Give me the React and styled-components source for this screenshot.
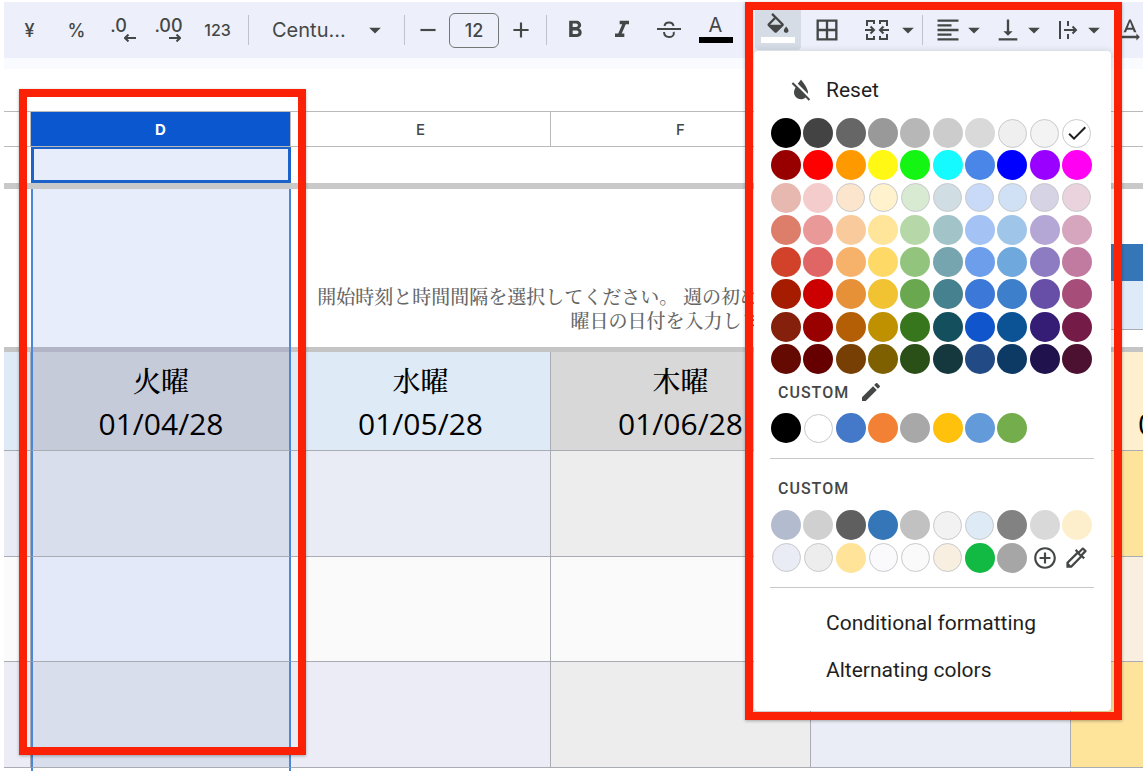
import React, {useState} from 'react';
import styled, {createGlobalStyle, css} from 'styled-components';
import {
  MdAdd,
  MdAddCircleOutline,
  MdArrowDropDown,
  MdBorderAll,
  MdCheck,
  MdEdit,
  MdFormatAlignLeft,
  MdFormatBold,
  MdFormatColorReset,
  MdFormatItalic,
  MdOutlineColorize,
  MdRemove,
  MdTextRotationNone,
  MdVerticalAlignBottom
} from 'react-icons/md';

const GlobalStyle = createGlobalStyle`
  * {
    box-sizing: border-box;
  }
  body {
    margin: 0;
    background: #fff;
    font-family: Roboto, 'Noto Sans CJK JP', sans-serif;
    color: #444746;
  }
  button, input, select {
    font: inherit;
    color: inherit;
    border: 0;
    padding: 0;
    background: none;
  }
`;

const Page = styled.div`
  position: relative;
  min-height: 100vh;
  padding: 2px 5px 0 4px;
  overflow: hidden;
`;

/* toolbar */
const Toolbar = styled.div`
  display: flex;
  align-items: center;
  height: 56px;
  padding-left: 2px;
  background: #edf0fa;
  font-family: Inter, sans-serif;
`;
const Tool = styled.button`
  display: flex;
  flex: none;
  align-items: center;
  justify-content: center;
  width: ${p => p.$width || 47}px;
  height: 40px;
  font-size: ${p => p.$size || 18}px;
  font-weight: 500;
  svg {
    flex: none;
  }
`;
const SplitTool = styled.div`
  display: flex;
  flex: none;
  margin-right: ${p => p.$gap}px;
`;
const Separator = styled.span`
  flex: none;
  width: 1px;
  height: 30px;
  margin: 0 ${p => p.$right || 7}px 0 ${p => p.$left || 7}px;
  background: #c0c3c9;
`;
const Decimal = styled.span`
  display: flex;
  flex-direction: column;
  align-items: ${p => (p.$arrow === 'left' ? 'flex-end' : 'center')};
  font-size: 18px;
  line-height: 16px;
  padding-right: ${p => (p.$arrow === 'left' ? 10 : 4)}px;
  svg {
    margin: ${p => (p.$arrow === 'left' ? '0 -9px 0 0' : '0 -12px 0 0')};
  }
`;
const FontPicker = styled.label`
  display: flex;
  flex: none;
  align-items: center;
  justify-content: space-between;
  width: 140px;
  padding: 0 7px 0 16px;
  select {
    appearance: none;
    width: 84px;
    font-size: 20px;
  }
  svg {
    flex: none;
  }
`;
const SizeInput = styled.input`
  flex: none;
  width: 50px;
  height: 35px;
  border: 1px solid #747775;
  border-radius: 6px;
  text-align: center;
  font-size: 18px;
  font-weight: 500;
`;
const Glyph = styled.span`
  display: flex;
  flex-direction: column;
  align-items: center;
  gap: ${p => p.$gap}px;
  padding-bottom: 4px;
  font-weight: 400;
  line-height: 24px;
  &::after {
    content: '';
    width: 34px;
    height: 6px;
    background: ${p => p.$bar};
  }
`;
const FillWrap = styled.div`
  position: relative;
  flex: none;
  margin-left: 16px;
`;
const FillButton = styled(Tool)`
  border-radius: 0 0 4px 4px;
  background: #d5dce6;
`;

/* colour menu */
const Menu = styled.div`
  position: absolute;
  z-index: 2;
  top: 41px;
  left: -1px;
  width: 357px;
  height: 660px;
  padding: 15px 17px 0 16px;
  border-radius: 4px;
  background: #fff;
  box-shadow: 0 2px 6px 2px rgba(60, 64, 67, 0.2);
  font-family: Roboto, sans-serif;
`;
const MenuItem = styled.button`
  display: flex;
  align-items: center;
  width: 100%;
  height: 47px;
  padding-left: ${p => (p.$icon ? 17 : 56)}px;
  gap: 11px;
  font-size: 21px;
  color: #1f1f1f;
  svg {
    color: #444746;
  }
`;
const Swatches = styled.div`
  display: grid;
  grid-template-columns: repeat(10, 1fr);
  grid-auto-rows: 1fr;
  place-items: center;
  width: 323px;
  height: ${p => p.$height}px;
  margin-top: ${p => p.$top || 0}px;
`;
const Swatch = styled.button`
  display: flex;
  align-items: center;
  justify-content: center;
  width: 30px;
  height: 30px;
  border-radius: 50%;
  background: ${p => p.$color};
  ${p =>
    p.$outlined &&
    css`
      width: 29px;
      height: 29px;
      border: 1px solid #c8cacc;
    `}
`;
const Caption = styled.div`
  display: flex;
  align-items: center;
  gap: 10px;
  height: 34px;
  padding-left: 8px;
  font-size: 16px;
  font-weight: 500;
  letter-spacing: 1px;
`;
const Divider = styled.hr`
  height: 1px;
  margin: ${p => p.$space};
  border: 0;
  background: #c7c9cc;
`;

/* sheet */
const Sheet = styled.div`
  overflow: hidden;
  padding-top: 42px;
  border-top: 11px solid #fafbfe;
`;
const Grid = styled.table`
  table-layout: fixed;
  width: 1327px;
  border-collapse: separate;
  border-spacing: 0;
  td, th {
    padding: 0;
  }
`;
const Head = styled.th`
  height: 36px;
  border: solid #b9bbbb;
  border-width: 1px 1px 1px 0;
  font: ${p => (p.$active ? 700 : 500)} 15px Inter, sans-serif;
  color: ${p => (p.$active ? '#fff' : '#444746')};
  background: ${p => (p.$active ? '#0b57d0' : '#fff')};
`;
const Cell = styled.td`
  height: ${p => p.$height}px;
  background: ${p => p.$bg || '#fff'};
  border-style: solid;
  border-color: #a9acb2;
  border-width: 0 ${p => (p.$lined ? 1 : 0)}px ${p => (p.$lined ? 1 : 0)}px 0;
  ${p =>
    p.$selected &&
    css`
      border-left: 2px solid #4a86d9;
      border-right: 2px solid #4a86d9;
    `}
`;
const ActiveCell = styled.td`
  height: 36px;
  border: 3px solid #1b63cb;
  border-top-width: 2px;
  background: #e8edfc;
`;
const DateCell = styled(Cell)`
  vertical-align: top;
  text-align: center;
  color: #000;
`;
const Day = styled.div`
  padding-top: 7px;
  font: 500 28px/43px 'Noto Serif CJK JP', 'Noto Sans CJK JP', serif;
`;
const DateText = styled.div`
  font: 30px/43px 'Open Sans', sans-serif;
`;
const Note = styled(Cell)`
  && {
    padding: 0 14px 15px 0;
  }
  vertical-align: bottom;
  text-align: right;
  white-space: nowrap;
  font: 500 19px/24px 'Noto Serif CJK JP', 'Noto Sans CJK JP', serif;
  color: #666;
`;
const Block = styled.div`
  height: ${p => p.$height}px;
  background: ${p => p.$bg};
  border-bottom: ${p => (p.$line ? '1px solid #a9acb2' : '0')};
`;

/* red marker frames over the sheet */
const Marker = styled.div`
  position: absolute;
  z-index: 3;
  top: ${p => p.$top}px;
  left: ${p => p.$left}px;
  width: ${p => p.$width}px;
  height: ${p => p.$height}px;
  border: 8px solid #fb2107;
  box-shadow: 0 1px 3px rgba(0, 0, 0, 0.3);
  pointer-events: none;
`;

const palette = [
  '#000000 #434343 #666666 #999999 #b7b7b7 #cccccc #d9d9d9 #efefef #f3f3f3 #ffffff',
  '#980000 #ff0000 #ff9900 #fff714 #14f514 #14faff #4a86e8 #0000ff #9900ff #ff00f2',
  '#e6b8af #f4cccc #fce5cd #fff2cc #d9ead3 #d0dde2 #c9daf8 #d0e0f5 #d6d3e4 #ead3dc',
  '#dd7e6b #ea9999 #f9cb9c #ffe599 #b6d7a8 #a2c4c9 #a4c2f4 #9fc5e8 #b4a7d6 #d5a6bd',
  '#d2412a #e06666 #f6b26b #ffd966 #93c47d #76a5af #6d9eeb #6fa8dc #8e7cc3 #c27ba0',
  '#a61c00 #cc0000 #e69138 #f1c232 #6aa84f #45818e #3c78d8 #3d7fca #674ea7 #a64d79',
  '#85200c #990000 #b45f06 #bf9000 #38761d #134f5c #1155cc #0b5394 #351c75 #741b47',
  '#650a02 #660000 #783f04 #7f6000 #2a5018 #14383d #224a84 #0d3a64 #20124d #4c1130'
].flatMap(row => row.split(' '));
const themeColors = '#000000 #ffffff #4379c8 #f38135 #a8a8a8 #ffc10b #629ada #73ad4c'.split(' ');
const customColors = (
  '#b3bccf #d0d0d0 #5f5f5f #3576b8 #c1c1c1 #f2f2f2 #dfeaf7 #828282 #d9d9d9 #feefcc ' +
  '#e9ebf5 #ededed #fee398 #fafafc #fafafa #f9efe0 #12b942 #a6a6a6'
).split(' ');
const outlined = [
  '#efefef', '#f3f3f3', '#ffffff', '#fce5cd', '#fff2cc', '#d9ead3', '#d0e0f5', '#d6d3e4',
  '#ead3dc', '#d0dde2', '#c9daf8', '#f2f2f2', '#dfeaf7', '#e9ebf5', '#ededed', '#fafafc',
  '#fafafa', '#f9efe0'
];

const days = [
  {day: '', date: '', bg: '#deebf7'},
  {day: '火曜', date: '01/04/28', bg: '#c6cbda', selected: true},
  {day: '水曜', date: '01/05/28', bg: '#deeaf6'},
  {day: '木曜', date: '01/06/28', bg: '#d8d8d8'},
  {day: '金曜', date: '01/07/28', bg: '#deeaf6'},
  {day: '土曜', date: '01/08/28', bg: '#feefce'}
];
const slots = [
  {height: 106, colors: ['#eaecf5', '#d9deec', '#eaecf5', '#ededed', '#eaecf5', '#fee39b']},
  {height: 105, colors: ['#fbfbfc', '#e3e9f8', '#fafafb', '#fafafa', '#fbfbfc', '#f9efe0']},
  {height: 106, colors: ['#ebecf5', '#d8deec', '#ebecf5', '#eeeded', '#ebedf6', '#fee39b']},
  {height: 3, colors: ['#fff', '#fff', '#fff', '#fff', '#fff', '#fff']}
];

const ArrowIcon = ({flip}) => (
  <svg width='12' height='8' viewBox='0 0 12 8' fill='none' stroke='currentColor' strokeWidth='2'>
    <path d={flip ? 'M0 4h11M7.500 .5L11 4 7.500 7.500' : 'M12 4H1M4.500 .5L1 4l3.500 3.500'} />
  </svg>
);
const StrikeIcon = () => (
  <svg width='24' height='20' viewBox='0 0 24 20' fill='none' stroke='currentColor' strokeWidth='2'>
    <path d='M0 9h24' />
    <path d='M7.500 6C7.800 3.800 9.600 2.500 12 2.500S16.200 3.800 16.500 6' />
    <path d='M7 12c.2 3 2.200 5 5 5s4.800-1.600 4.800-3.600c0-.6-.1-1-.3-1.400' />
  </svg>
);
const BucketIcon = () => (
  <svg width='28' height='21' viewBox='0 0 24 18' fill='currentColor'>
    <path d='M16.560 8.940L7.620 0 6.210 1.410l2.380 2.380-5.150 5.150c-.59.59-.59 1.540 0 2.120l5.500 5.500c.29.29.68.44 1.060.44s.77-.15 1.060-.44l5.500-5.500c.59-.58.59-1.530 0-2.120zM5.210 10L10 5.210 14.790 10H5.210zM19 11.500s-2 2.170-2 3.500c0 1.100.9 2 2 2s2-.9 2-2c0-1.330-2-3.500-2-3.500z' />
  </svg>
);
const MergeIcon = () => (
  <svg width='24' height='22' viewBox='0 0 24 22' fill='none' stroke='currentColor' strokeWidth='2'>
    <path d='M9 2H2v5M9 20H2v-5M15 2h7v5M15 20h7v-5M9 1v4M9 21v-4M15 1v4M15 21v-4' />
    <path d='M0 11h9M5.500 7.500L9 11l-3.500 3.500M24 11h-9M18.500 7.500L15 11l3.500 3.500' />
  </svg>
);
const OverflowIcon = () => (
  <svg width='20' height='20' viewBox='0 0 20 20' fill='none' stroke='currentColor' strokeWidth='2'>
    <path d='M2 1v18M10 1v5M10 14v5M6 10h12M14.500 6.500L18 10l-3.500 3.500' />
  </svg>
);

const DropTool = ({width = 36, gap = 0, label, children}) => (
  <SplitTool $gap={gap}>
    <Tool $width={width} aria-label={label}>
      {children}
    </Tool>
    <Tool $width={16} aria-label={`${label} options`}>
      <MdArrowDropDown size={28} />
    </Tool>
  </SplitTool>
);

const SwatchList = ({colors, height, top, current, onPick, children}) => (
  <Swatches $height={height} $top={top}>
    {colors.map(color => (
      <Swatch
        key={color}
        $color={color}
        $outlined={outlined.includes(color)}
        aria-label={color}
        onClick={() => onPick(color)}
      >
        {current === color && <MdCheck size={24} color='#1f1f1f' />}
      </Swatch>
    ))}
    {children}
  </Swatches>
);

const ColorMenu = ({fill, setFill}) => (
  <Menu>
    <MenuItem $icon onClick={() => setFill('#ffffff')}>
      <MdFormatColorReset size={28} />
      Reset
    </MenuItem>
    <SwatchList colors={palette} height={258} top={4} current={fill} onPick={setFill} />
    <Caption>
      CUSTOM
      <MdEdit size={24} />
    </Caption>
    <SwatchList colors={themeColors} height={38} onPick={setFill} />
    <Divider $space='11px 0 12px' />
    <Caption>CUSTOM</Caption>
    <SwatchList colors={customColors} height={65} top={4} onPick={setFill}>
      <Swatch aria-label='add'>
        <MdAddCircleOutline size={26} />
      </Swatch>
      <Swatch aria-label='pick'>
        <MdOutlineColorize size={27} />
      </Swatch>
    </SwatchList>
    <Divider $space='13px 0 11px' />
    <MenuItem>Conditional formatting</MenuItem>
    <MenuItem>Alternating colors</MenuItem>
  </Menu>
);

const App = () => {
  const [fill, setFill] = useState('#ffffff');
  const [size, setSize] = useState(12);

  return (
    <Page>
      <GlobalStyle />
      <Toolbar>
        <Tool>¥</Tool>
        <Tool>%</Tool>
        <Tool>
          <Decimal $arrow='left'>
            .0
            <ArrowIcon />
          </Decimal>
        </Tool>
        <Tool>
          <Decimal $arrow='right'>
            .00
            <ArrowIcon flip />
          </Decimal>
        </Tool>
        <Tool $size={16}>123</Tool>
        <Separator />
        <FontPicker>
          <select aria-label='font'>
            <option>Centu...</option>
          </select>
          <MdArrowDropDown size={28} />
        </FontPicker>
        <Separator $left={8} $right={2} />
        <Tool $width={42} aria-label='smaller' onClick={() => setSize(size - 1)}>
          <MdRemove size={26} />
        </Tool>
        <SizeInput aria-label='size' value={size} onChange={e => setSize(+e.target.value)} />
        <Tool $width={44} aria-label='larger' onClick={() => setSize(size + 1)}>
          <MdAdd size={26} />
        </Tool>
        <Separator $left={3} $right={4} />
        <Tool aria-label='bold'>
          <MdFormatBold size={28} />
        </Tool>
        <Tool aria-label='italic'>
          <MdFormatItalic size={28} />
        </Tool>
        <Tool aria-label='strikethrough'>
          <StrikeIcon />
        </Tool>
        <Tool $size={20}>
          <Glyph $gap={0} $bar='#000'>
            A
          </Glyph>
        </Tool>
        <FillWrap>
          <FillButton $width={46} aria-label='fill'>
            <Glyph $gap={3} $bar={fill}>
              <BucketIcon />
            </Glyph>
          </FillButton>
          <ColorMenu fill={fill} setFill={setFill} />
        </FillWrap>
        <Tool $width={52} aria-label='borders'>
          <MdBorderAll size={28} />
        </Tool>
        <DropTool width={47} label='merge'>
          <MergeIcon />
        </DropTool>
        <Separator $left={6} />
        <DropTool gap={8} label='align'>
          <MdFormatAlignLeft size={28} />
        </DropTool>
        <DropTool gap={8} label='vertical align'>
          <MdVerticalAlignBottom size={28} />
        </DropTool>
        <DropTool label='overflow'>
          <OverflowIcon />
        </DropTool>
        <Tool $width={56} aria-label='rotate'>
          <MdTextRotationNone size={28} />
        </Tool>
      </Toolbar>

      <Sheet>
        <Grid>
          <colgroup>
            <col width='27' />
            {['D', 'E', 'F', 'G', 'H'].map(name => (
              <col key={name} width='260' />
            ))}
          </colgroup>
          <thead>
            <tr>
              <Head />
              {['D', 'E', 'F', 'G', 'H'].map(name => (
                <Head key={name} $active={name === 'D'}>
                  {name}
                </Head>
              ))}
            </tr>
          </thead>
          <tbody>
            <tr>
              <Cell />
              <ActiveCell />
              <Cell colSpan={4} />
            </tr>
            <tr>
              <Cell colSpan={6} $height={6} $bg='#c9c9c9' />
            </tr>
            <tr>
              <Cell />
              <Cell $height={158} $bg='#e8edfc' $selected />
              <Note colSpan={2}>
                開始時刻と時間間隔を選択してください。 週の初めの月
                <br />
                曜日の日付を入力します。
              </Note>
              <Cell />
              <Cell>
                <Block $height={55} $bg='#fff' />
                <Block $height={37} $bg='#3576b8' />
                <Block $height={49} $bg='#deeaf7' $line />
                <Block $height={17} $bg='#fff' />
              </Cell>
            </tr>
            <tr>
              <Cell $height={5} $bg='#c4c5c4' />
              <Cell $bg='#b1b5c6' $selected />
              <Cell colSpan={4} $bg='#c4c5c4' />
            </tr>
            <tr>
              {days.map(item => (
                <DateCell
                  key={item.date}
                  $height={99}
                  $bg={item.bg}
                  $selected={item.selected}
                  $lined
                >
                  <Day>{item.day}</Day>
                  <DateText>{item.date}</DateText>
                </DateCell>
              ))}
            </tr>
            {slots.map((slot, row) => (
              <tr key={row}>
                {slot.colors.map((color, i) => (
                  <Cell key={i} $height={slot.height} $bg={color} $selected={i === 1} $lined={row < 3} />
                ))}
              </tr>
            ))}
          </tbody>
        </Grid>
      </Sheet>

      <Marker $left={19} $top={89} $width={287} $height={666} />
      <Marker $left={745} $top={2} $width={377} $height={718} />
    </Page>
  );
};

export default App;
